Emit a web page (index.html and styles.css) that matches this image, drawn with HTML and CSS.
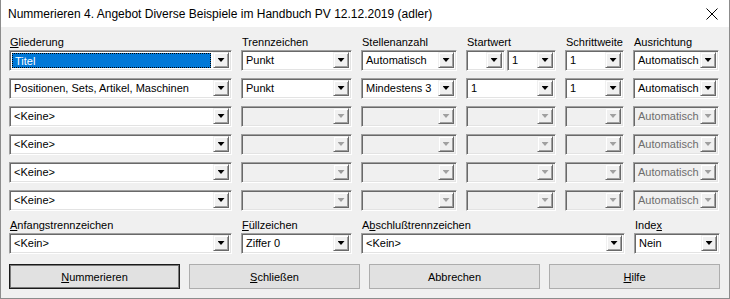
FILE: index.html
```html
<!DOCTYPE html>
<html lang="de">
<head>
    <meta charset="UTF-8">
    <title>Nummerieren</title>
    <link rel="stylesheet" href="styles.css">
</head>
<body>
<div class="window">
    <div class="titlebar">
        <span class="title">Nummerieren 4. Angebot Diverse Beispiele im Handbuch PV 12.12.2019 (adler)</span>
        <svg class="close" width="12" height="12" viewBox="0 0 12 12">
            <path d="M0.5 0.5 L11.5 11.5 M11.5 0.5 L0.5 11.5" stroke="#000" stroke-width="1" fill="none"/>
        </svg>
    </div>
    <div class="content">
        <div class="grid">
            <div class="lbl"><u>G</u>liederung</div>
            <div class="lbl">Trennzeichen</div>
            <div class="lbl">Stellenanzahl</div>
            <div class="lbl">Startwert</div>
            <div class="lbl">Schrittweite</div>
            <div class="lbl">Ausrichtung</div>

            <!-- Zeile 1 -->
            <div class="combo"><span class="val sel">Titel</span><span class="drop"></span></div>
            <div class="combo"><span class="val">Punkt</span><span class="drop"></span></div>
            <div class="combo"><span class="val">Automatisch</span><span class="drop"></span></div>
            <div class="pair">
                <div class="combo small"><span class="val"></span><span class="drop"></span></div>
                <div class="combo"><span class="val">1</span><span class="drop"></span></div>
            </div>
            <div class="combo"><span class="val">1</span><span class="drop"></span></div>
            <div class="combo"><span class="val">Automatisch</span><span class="drop"></span></div>

            <!-- Zeile 2 -->
            <div class="combo"><span class="val">Positionen, Sets, Artikel, Maschinen</span><span class="drop"></span></div>
            <div class="combo"><span class="val">Punkt</span><span class="drop"></span></div>
            <div class="combo"><span class="val">Mindestens 3</span><span class="drop"></span></div>
            <div class="combo"><span class="val">1</span><span class="drop"></span></div>
            <div class="combo"><span class="val">1</span><span class="drop"></span></div>
            <div class="combo"><span class="val">Automatisch</span><span class="drop"></span></div>

            <!-- Zeile 3 -->
            <div class="combo"><span class="val">&lt;Keine&gt;</span><span class="drop"></span></div>
            <div class="combo off"><span class="val"></span><span class="drop"></span></div>
            <div class="combo off"><span class="val"></span><span class="drop"></span></div>
            <div class="combo off"><span class="val"></span><span class="drop"></span></div>
            <div class="combo off"><span class="val"></span><span class="drop"></span></div>
            <div class="combo off"><span class="val">Automatisch</span><span class="drop"></span></div>

            <!-- Zeile 4 -->
            <div class="combo"><span class="val">&lt;Keine&gt;</span><span class="drop"></span></div>
            <div class="combo off"><span class="val"></span><span class="drop"></span></div>
            <div class="combo off"><span class="val"></span><span class="drop"></span></div>
            <div class="combo off"><span class="val"></span><span class="drop"></span></div>
            <div class="combo off"><span class="val"></span><span class="drop"></span></div>
            <div class="combo off"><span class="val">Automatisch</span><span class="drop"></span></div>

            <!-- Zeile 5 -->
            <div class="combo"><span class="val">&lt;Keine&gt;</span><span class="drop"></span></div>
            <div class="combo off"><span class="val"></span><span class="drop"></span></div>
            <div class="combo off"><span class="val"></span><span class="drop"></span></div>
            <div class="combo off"><span class="val"></span><span class="drop"></span></div>
            <div class="combo off"><span class="val"></span><span class="drop"></span></div>
            <div class="combo off"><span class="val">Automatisch</span><span class="drop"></span></div>

            <!-- Zeile 6 -->
            <div class="combo"><span class="val">&lt;Keine&gt;</span><span class="drop"></span></div>
            <div class="combo off"><span class="val"></span><span class="drop"></span></div>
            <div class="combo off"><span class="val"></span><span class="drop"></span></div>
            <div class="combo off"><span class="val"></span><span class="drop"></span></div>
            <div class="combo off"><span class="val"></span><span class="drop"></span></div>
            <div class="combo off"><span class="val">Automatisch</span><span class="drop"></span></div>
        </div>

        <div class="bottom">
            <div class="lbl"><u>A</u>nfangstrennzeichen</div>
            <div class="lbl"><u>F</u>üllzeichen</div>
            <div class="lbl">A<u>b</u>schlußtrennzeichen</div>
            <div class="lbl">Inde<u>x</u></div>
            <div class="combo"><span class="val">&lt;Kein&gt;</span><span class="drop"></span></div>
            <div class="combo"><span class="val">Ziffer 0</span><span class="drop"></span></div>
            <div class="combo"><span class="val">&lt;Kein&gt;</span><span class="drop"></span></div>
            <div class="combo"><span class="val">Nein</span><span class="drop"></span></div>
        </div>

        <div class="buttons">
            <button class="btn default"><u>N</u>ummerieren</button>
            <button class="btn"><u>S</u>chließen</button>
            <button class="btn">Abbrechen</button>
            <button class="btn"><u>H</u>ilfe</button>
        </div>
    </div>
</div>
</body>
</html>
```

FILE: styles.css
```css
body {
    margin: 0;
    padding: 0;
    background: #f0f0f0;
    font-family: "Liberation Sans", Arial, sans-serif;
    font-size: 11px;
    color: #000;
    overflow: hidden;
}
.window {
    width: 730px;
    height: 299px;
    box-sizing: border-box;
    border: 1px solid #8c8c8c;
    border-top: none;
    background: #f0f0f0;
}
.titlebar {
    height: 27px;
    background: #fff;
    display: flex;
    align-items: center;
    justify-content: space-between;
    padding: 0 11px 0 7px;
}
.title {
    font-size: 12px;
}
.close {
    display: block;
}
.content {
    padding: 8px 0 0 8px;
}
.lbl {
    line-height: 14px;
    height: 14px;
    white-space: nowrap;
    margin-bottom: 1px;
    padding-left: 1px;
}
.grid {
    display: grid;
    grid-template-columns: 223px 111px 96px 90px 59px 86px;
    column-gap: 9px;
    row-gap: 7px;
}
.grid .lbl {
    margin-bottom: -6px;
}
.pair {
    display: flex;
    gap: 2px;
}
.pair .combo {
    flex: 1;
}
.pair .combo.small {
    flex: 0 0 39px;
}
.combo {
    display: flex;
    height: 21px;
    box-sizing: border-box;
    background: #fff;
    border: 1px solid;
    border-color: #a0a0a0 #fff #fff #a0a0a0;
    box-shadow: inset 1px 1px 0 #696969, inset -1px -1px 0 #e3e3e3;
    padding: 1px 2px 2px 1px;
}
.val {
    flex: 1;
    min-width: 0;
    padding-left: 3px;
    line-height: 17px;
    white-space: nowrap;
    overflow: hidden;
}
.val.sel {
    background: #0078d7;
    color: #fff;
    border: 1px dotted #000;
    margin: 1px 2px 0 1px;
    line-height: 14px;
    padding-left: 2px;
}
.drop {
    width: 16px;
    height: 16px;
    box-sizing: border-box;
    background: #f0f0f0;
    border: 1px solid;
    border-color: #f0f0f0 #696969 #696969 #f0f0f0;
    box-shadow: inset 1px 1px 0 #fff, inset -1px -1px 0 #a0a0a0;
    display: flex;
    align-items: center;
    justify-content: center;
}
.drop::after {
    content: "";
    width: 7px;
    height: 4px;
    background: #000;
    clip-path: polygon(0 0, 100% 0, 50% 100%);
}
.combo.off {
    background: #f0f0f0;
}
.combo.off .val {
    color: #6d6d6d;
}
.combo.off .drop::after {
    background: #a0a0a0;
}
.bottom {
    display: grid;
    grid-template-columns: 223px 111px 264px 86px;
    column-gap: 9px;
    margin-top: 7px;
}
.buttons {
    display: grid;
    grid-template-columns: repeat(4, 171px);
    column-gap: 9px;
    margin-top: 10px;
}
.btn {
    height: 25px;
    background: #e1e1e1;
    border: 1px solid #adadad;
    font-family: "Liberation Sans", Arial, sans-serif;
    font-size: 11px;
    color: #000;
    padding: 0;
}
.btn.default {
    border-color: #1a1a1a;
    box-shadow: inset 0 0 0 1px #7a7a7a;
}
```
